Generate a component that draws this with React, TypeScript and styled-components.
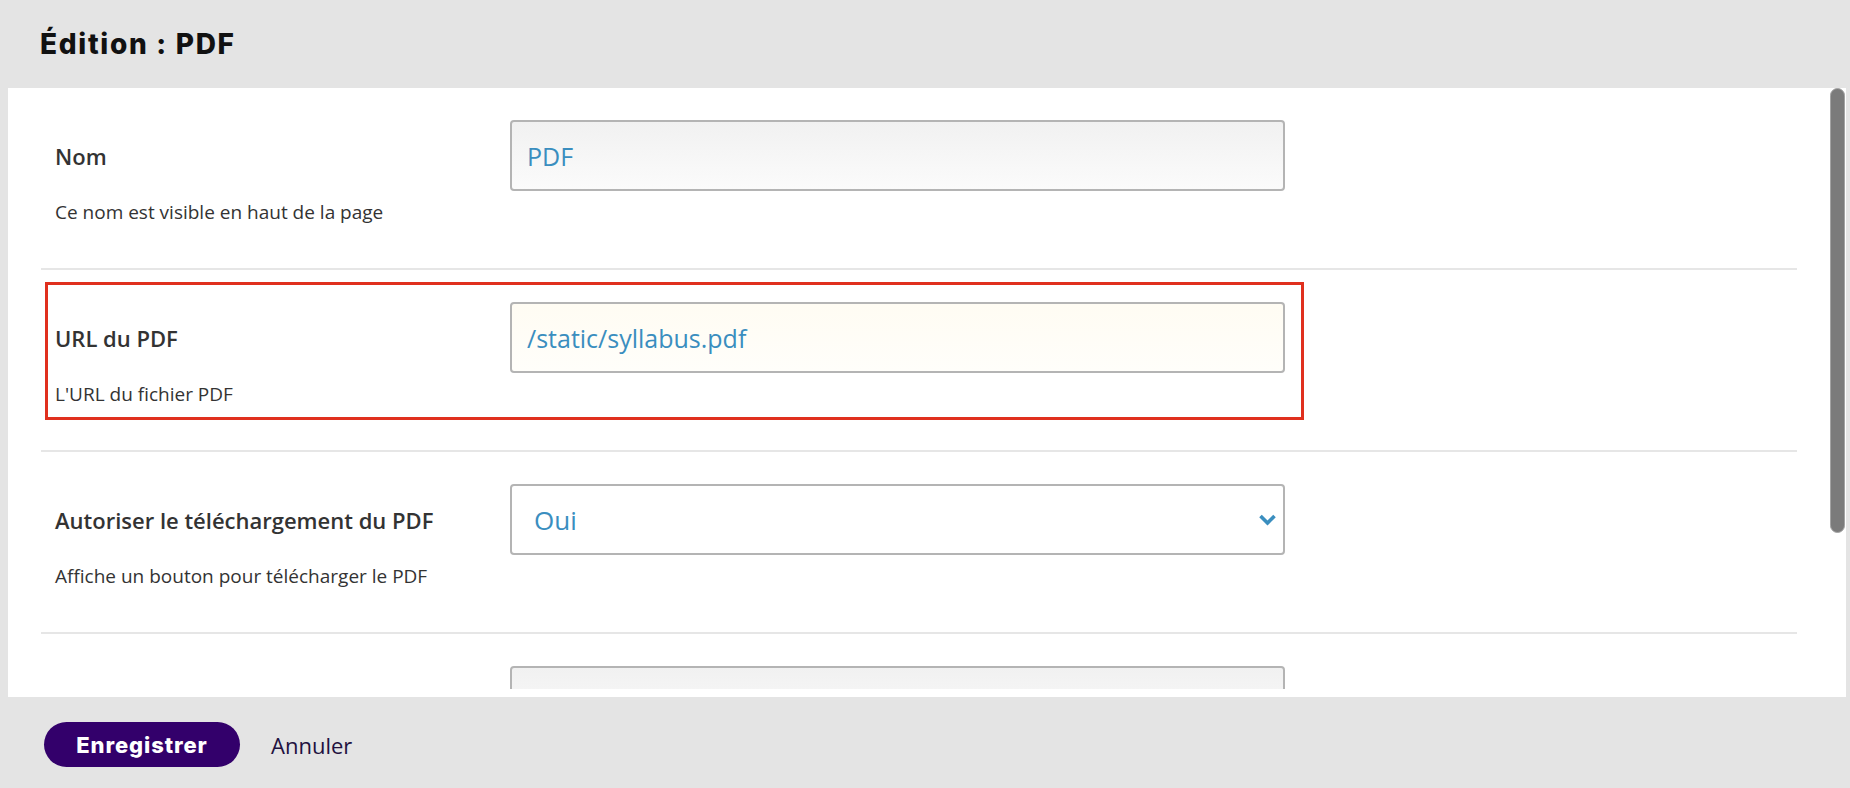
import React from "react";
import styled, { createGlobalStyle } from "styled-components";

const GlobalStyle = createGlobalStyle`
  html, body {
    margin: 0;
    padding: 0;
    background: #e4e4e4;
    overflow: hidden;
  }
  * { box-sizing: border-box; }
`;

const Page = styled.div`
  height: 788px;
  display: flex;
  flex-direction: column;
  font-family: "Open Sans", "Noto Sans", sans-serif;
  color: #333;
`;

const Header = styled.header`
  height: 88px;
  flex: none;
  display: flex;
  align-items: center;
  padding-left: 40px;
  padding-bottom: 1px;
`;

const Title = styled.h1`
  margin: 0;
  font-family: Inter, "Lato", sans-serif;
  font-weight: 800;
  font-size: 28px;
  letter-spacing: 1.7px;
  color: #111;
`;

const Panel = styled.main`
  height: 609px;
  flex: none;
  margin: 0 4px 0 8px;
  background: #fff;
  display: flex;
`;

const ScrollArea = styled.div`
  flex: 1;
  min-width: 0;
  height: 601px;
  overflow: hidden;
`;

const ScrollTrack = styled.div`
  width: 16px;
  flex: none;
  padding-right: 1px;
`;

const ScrollThumb = styled.div`
  height: 445px;
  width: 15px;
  background: #7b7b7b;
  border: 1px solid #a3a3a3;
  border-radius: 8px;
`;

const FormList = styled.div`
  padding-bottom: 84px;
`;

const Row = styled.section`
  margin: 0 33px 0 33px;
  padding: 12px 0 30px;
  border-bottom: 2px solid #e6e6e6;
`;

const Field = styled.div<{ $highlight?: boolean }>`
  display: grid;
  grid-template-columns: 455px 775px;
  width: fit-content;
  margin-left: 4px;
  padding: 17px 16px 10px 7px;
  border: 3px solid ${(p) => (p.$highlight ? "#e0301e" : "transparent")};
`;

const LabelCol = styled.div`
  display: flex;
  flex-direction: column;
`;

const Label = styled.label`
  height: 71px;
  display: flex;
  align-items: center;
  font-size: 22px;
  font-weight: 600;
  color: #333;
`;

const Help = styled.p`
  margin: 8px 0 0;
  font-size: 19px;
  line-height: 26px;
  color: #333;
`;

const inputBase = `
  width: 775px;
  height: 71px;
  border: 2px solid #b4b4b4;
  border-radius: 4px;
  padding: 0 15px;
  font-family: "Open Sans", "Noto Sans", sans-serif;
  font-size: 25px;
  color: #3a8ebf;
  outline: none;
`;

const TextInput = styled.input<{ $tone?: "grey" | "cream" }>`
  ${inputBase}
  background: ${(p) =>
    p.$tone === "cream"
      ? "linear-gradient(#fffcf3, #fffefa)"
      : "linear-gradient(#f1f1f1, #fbfbfb)"};
`;

const SelectBox = styled.div`
  ${inputBase}
  font-size: 26px;
  background: #fff;
  display: flex;
  align-items: center;
  justify-content: space-between;
  padding-left: 22px;
  padding-right: 6px;
`;

const Chevron = () => (
  <svg width="19" height="13" viewBox="0 0 19 13" aria-hidden="true">
    <path
      d="M2.5 3 L9.5 10 L16.5 3"
      fill="none"
      stroke="#3a8ebf"
      strokeWidth="3.6"
      strokeLinecap="butt"
      strokeLinejoin="miter"
    />
  </svg>
);

const Footer = styled.footer`
  flex: 1;
  display: flex;
  align-items: flex-start;
  gap: 31px;
  padding: 25px 0 0 44px;
`;

const SaveButton = styled.button`
  height: 45px;
  width: 196px;
  border: none;
  border-radius: 23px;
  background: #33006b;
  color: #fff;
  font-family: Inter, "Lato", sans-serif;
  font-weight: 800;
  font-size: 22px;
  letter-spacing: 0.9px;
  cursor: pointer;
`;

const CancelLink = styled.button`
  height: 45px;
  border: none;
  background: none;
  padding: 0;
  font-family: "Open Sans", "Noto Sans", sans-serif;
  font-size: 22px;
  color: #22113f;
  cursor: pointer;
`;

export default function App() {
  return (
    <>
      <GlobalStyle />
      <Page>
        <Header>
          <Title>Édition : PDF</Title>
        </Header>
        <Panel>
          <ScrollArea>
            <FormList>
              <Row>
                <Field>
                  <LabelCol>
                    <Label>Nom</Label>
                    <Help>Ce nom est visible en haut de la page</Help>
                  </LabelCol>
                  <TextInput $tone="grey" defaultValue="PDF" />
                </Field>
              </Row>
              <Row>
                <Field $highlight>
                  <LabelCol>
                    <Label>URL du PDF</Label>
                    <Help>L'URL du fichier PDF</Help>
                  </LabelCol>
                  <TextInput $tone="cream" defaultValue="/static/syllabus.pdf" />
                </Field>
              </Row>
              <Row>
                <Field>
                  <LabelCol>
                    <Label>Autoriser le téléchargement du PDF</Label>
                    <Help>Affiche un bouton pour télécharger le PDF</Help>
                  </LabelCol>
                  <SelectBox>
                    <span>Oui</span>
                    <Chevron />
                  </SelectBox>
                </Field>
              </Row>
              <Row>
                <Field>
                  <LabelCol>
                    <Label />
                  </LabelCol>
                  <TextInput $tone="grey" defaultValue="" aria-label="Champ suivant" />
                </Field>
              </Row>
            </FormList>
          </ScrollArea>
          <ScrollTrack>
            <ScrollThumb />
          </ScrollTrack>
        </Panel>
        <Footer>
          <SaveButton>Enregistrer</SaveButton>
          <CancelLink>Annuler</CancelLink>
        </Footer>
      </Page>
    </>
  );
}
